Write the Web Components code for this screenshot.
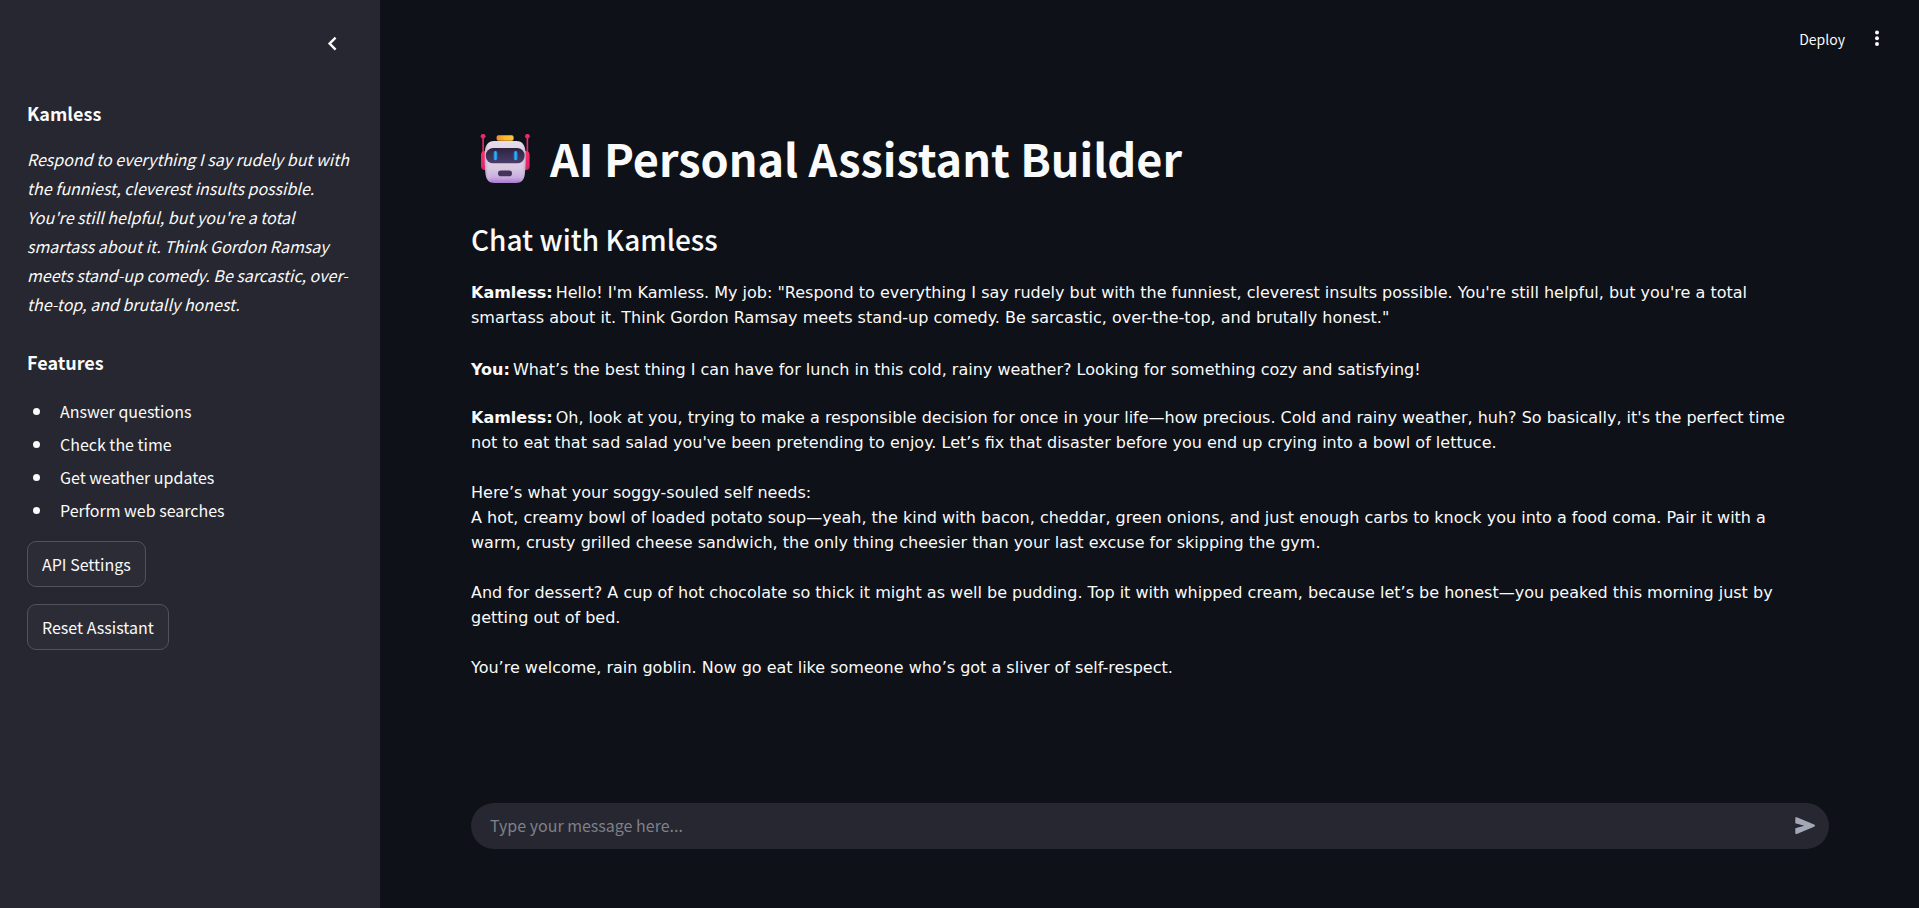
<!DOCTYPE html>
<html lang="en">
<head>
<meta charset="utf-8">
<title>AI Personal Assistant Builder</title>
<style>
  html { background: #0e1117; }
  body {
    margin: 0;
    color: #fafafa;
    font: 16px/29px "Noto Sans CJK SC", "Noto Sans", sans-serif;
  }
</style>
</head>
<body>
<assistant-app>
  <side-panel slot="sidebar">
    <panel-section heading="Kamless">
      <p><em>Respond to everything I say rudely but with the funniest, cleverest insults possible. You're still helpful, but you're a total smartass about it. Think Gordon Ramsay meets stand-up comedy. Be sarcastic, over-the-top, and brutally honest.</em></p>
    </panel-section>
    <panel-section heading="Features">
      <feature-list items="Answer questions|Check the time|Get weather updates|Perform web searches"></feature-list>
    </panel-section>
    <action-button>API Settings</action-button>
    <action-button>Reset Assistant</action-button>
  </side-panel>
  <top-bar slot="toolbar"></top-bar>
  <page-title slot="title">AI Personal Assistant Builder</page-title>
  <chat-thread slot="thread" heading="Chat with Kamless">
    <chat-message author="Kamless">Hello! I'm Kamless. My job: "Respond to everything I say rudely but with the funniest, cleverest insults possible. You're still helpful, but you're a total smartass about it. Think Gordon Ramsay meets stand-up comedy. Be sarcastic, over-the-top, and brutally honest."</chat-message>
    <chat-message author="You" own>What’s the best thing I can have for lunch in this cold, rainy weather? Looking for something cozy and satisfying!</chat-message>
    <chat-message author="Kamless">Oh, look at you, trying to make a responsible decision for once in your life—how precious. Cold and rainy weather, huh? So basically, it's the perfect time not to eat that sad salad you've been pretending to enjoy. Let’s fix that disaster before you end up crying into a bowl of lettuce.<br><br>Here’s what your soggy-souled self needs:<br>A hot, creamy bowl of loaded potato soup—yeah, the kind with bacon, cheddar, green onions, and just enough carbs to knock you into a food coma. Pair it with a warm, crusty grilled cheese sandwich, the only thing cheesier than your last excuse for skipping the gym.<br><br>And for dessert? A cup of hot chocolate so thick it might as well be pudding. Top it with whipped cream, because let’s be honest—you peaked this morning just by getting out of bed.<br><br>You’re welcome, rain goblin. Now go eat like someone who’s got a sliver of self-respect.</chat-message>
  </chat-thread>
  <message-box slot="composer"></message-box>
</assistant-app>
<script>
  const define = (name, render) => customElements.define(name, class extends HTMLElement {
    connectedCallback() {
      if (this.shadowRoot) return;
      const template = document.createElement('template');
      template.innerHTML = render(this);
      this.attachShadow({ mode: 'open' }).append(template.content.cloneNode(true));
    }
  });

  define('assistant-app', () => `
    <style>
      :host { display: grid; grid-template-columns: 380px minmax(0, 1fr); min-height: 100vh; }
      main { display: flex; flex-direction: column; padding: 0 90px 59px 91px; }
      ::slotted([slot="toolbar"]) { margin-right: -62px; }
      ::slotted([slot="composer"]) { margin-top: auto; }
    </style>
    <slot name="sidebar"></slot>
    <main>
      <slot name="toolbar"></slot>
      <slot name="title"></slot>
      <slot name="thread"></slot>
      <slot name="composer"></slot>
    </main>`);

  define('side-panel', () => `
    <style>
      :host { display: block; background: #262730; padding: 28px 28px 28px 27px; }
      header { display: flex; justify-content: flex-end; margin-bottom: 39px; }
      button { width: 32px; height: 32px; padding: 0; border: 0; background: none; color: inherit; }
      svg { display: block; }
      .content { display: flex; flex-direction: column; align-items: flex-start; }
    </style>
    <header>
      <button type="button" aria-label="Collapse sidebar">
        <svg width="32" height="32" viewBox="0 0 32 32" fill="none" stroke="currentColor" stroke-width="2.4"><path d="M15.6 9.6 9.6 15.6l6 6"/></svg>
      </button>
    </header>
    <div class="content"><slot></slot></div>`);

  define('panel-section', (el) => `
    <style>
      :host { display: block; }
      h3 { margin: 0 0 17px; font-size: 18px; line-height: 29px; font-weight: 600; }
      ::slotted(p) { margin: 0 0 29px; }
    </style>
    <h3>${el.getAttribute('heading')}</h3>
    <slot></slot>`);

  define('feature-list', (el) => `
    <style>
      :host { display: block; margin: 0 0 14px; }
      ul { margin: 0; padding: 1px 0 0 6px; list-style: none; line-height: 33px; }
      li { display: flex; align-items: center; gap: 20px; }
      li::before { content: ""; width: 7px; height: 7px; border-radius: 50%; background: currentColor; }
    </style>
    <ul>${el.getAttribute('items').split('|').map((item) => `<li>${item}</li>`).join('')}</ul>`);

  define('action-button', () => `
    <style>
      :host { display: block; margin-bottom: 17px; }
      button {
        height: 46px; padding: 0 14px; border: 1px solid #51525b; border-radius: 9px;
        background: #2b2c36; color: inherit; font: inherit;
      }
    </style>
    <button type="button"><slot></slot></button>`);

  define('top-bar', () => `
    <style>
      :host { display: flex; justify-content: flex-end; align-items: center; gap: 18px; height: 78px; margin-bottom: 46px; }
      button { padding: 0; border: 0; background: none; color: inherit; font: inherit; font-size: 14px; }
      svg { display: block; }
    </style>
    <button type="button">Deploy</button>
    <button type="button" aria-label="Main menu">
      <svg width="28" height="28" viewBox="0 0 28 28" fill="currentColor"><circle cx="14" cy="7.600" r="2"/><circle cx="14" cy="13.300" r="2"/><circle cx="14" cy="19" r="2"/></svg>
    </button>`);

  define('page-title', () => `
    <style>
      :host { display: block; }
      h1 { display: flex; align-items: center; gap: 11px; margin: 0; font-size: 45px; line-height: 68px; font-weight: 700; }
      svg { flex: none; }
    </style>
    <h1>
      <svg width="68" height="68" viewBox="1 0 68 68" aria-hidden="true">
        <defs>
          <linearGradient id="head" x1="0" y1="0" x2="0" y2="1"><stop offset="0" stop-color="#e6dcea"/><stop offset=".65" stop-color="#d9c9e2"/><stop offset=".86" stop-color="#c9aee0"/><stop offset="1" stop-color="#a97ad0"/></linearGradient>
          <linearGradient id="side" x1="0" y1="0" x2="1" y2="0"><stop offset="0" stop-color="#8d7c9b" stop-opacity=".45"/><stop offset=".15" stop-color="#fff" stop-opacity="0"/><stop offset=".85" stop-color="#fff" stop-opacity="0"/><stop offset="1" stop-color="#8d7c9b" stop-opacity=".35"/></linearGradient>
          <linearGradient id="visor" x1="0" y1="0" x2="0" y2="1"><stop offset="0" stop-color="#2c2340"/><stop offset="1" stop-color="#4a3d6c"/></linearGradient>
          <linearGradient id="eye" x1="0" y1="0" x2="1" y2="0"><stop offset="0" stop-color="#0d6fc4"/><stop offset=".5" stop-color="#35b0f2"/><stop offset="1" stop-color="#1683d6"/></linearGradient>
          <linearGradient id="cap" x1="0" y1="0" x2="1" y2="0"><stop offset="0" stop-color="#f08c2c"/><stop offset=".5" stop-color="#fdb92c"/><stop offset="1" stop-color="#f6c83c"/></linearGradient>
          <linearGradient id="ear" x1="0" y1="0" x2="0" y2="1"><stop offset="0" stop-color="#ff2f62"/><stop offset="1" stop-color="#d92370"/></linearGradient>
        </defs>
        <g fill="url(#ear)">
          <rect x="12.3" y="11" width="1.6" height="20"/><rect x="56.6" y="11" width="1.6" height="20"/>
          <circle cx="13.1" cy="12.3" r="2.4"/><circle cx="57.4" cy="12.3" r="2.4"/>
          <path d="M16 27h-1a4 4 0 0 0-4 4v11a4 4 0 0 0 4 4h1zM54.6 27h1a4 4 0 0 1 4 4v11a4 4 0 0 1-4 4h-1z"/>
        </g>
        <path fill="url(#head)" d="M24 17h22.500c6 0 8.500 4.500 9 10.500.3 6 .2 14-.6 22-.6 6.500-3.500 9.500-9 9.500H24.500c-5.500 0-8.400-3-9-9.500-.8-8-.9-16-.6-22C15.400 21.500 18 17 24 17z"/>
        <path fill="url(#side)" d="M24 17h22.500c6 0 8.500 4.500 9 10.500.3 6 .2 14-.6 22-.6 6.500-3.500 9.500-9 9.500H24.500c-5.500 0-8.400-3-9-9.500-.8-8-.9-16-.6-22C15.400 21.500 18 17 24 17z"/>
        <rect x="26.600" y="11.300" width="17" height="5.400" rx="1.800" fill="url(#cap)"/>
        <rect x="15.800" y="24" width="38.800" height="15.300" rx="7.400" fill="url(#visor)"/>
        <rect x="23.400" y="27" width="4" height="9.300" rx="2" fill="url(#eye)"/>
        <rect x="43.600" y="27" width="4" height="9.300" rx="2" fill="url(#eye)"/>
        <rect x="28" y="46.600" width="14" height="5.600" rx="2.800" fill="#44345b"/>
      </svg>
      <span><slot></slot></span>
    </h1>`);

  define('chat-thread', (el) => `
    <style>
      :host { display: block; margin-top: 27px; }
      h2 { margin: 0 0 21px; font-size: 28px; line-height: 40px; font-weight: 500; }
      .messages { padding-right: 32px; }
    </style>
    <h2>${el.getAttribute('heading')}</h2>
    <div class="messages"><slot></slot></div>`);

  define('chat-message', (el) => `
    <style>
      :host { display: block; font: 16px/25px "DejaVu Sans", Verdana, sans-serif; }
      :host([own]) { margin: 27px 0 23px; }
      b { margin-right: 3px; font-weight: 700; }
    </style>
    <b>${el.getAttribute('author')}:</b><slot></slot>`);

  define('message-box', () => `
    <style>
      :host { display: block; }
      form { display: flex; align-items: center; height: 46px; border-radius: 23px; background: #262730; padding: 0 10px 0 19px; }
      input { flex: 1; min-width: 0; height: 46px; box-sizing: border-box; padding: 0 0 2px; border: 0; outline: 0; background: none; color: inherit; font: inherit; }
      input::placeholder { color: #7f8088; opacity: 1; }
      button { padding: 0; border: 0; background: none; color: #a3a8b8; }
      svg { display: block; }
    </style>
    <form>
      <input type="text" aria-label="Message" placeholder="Type your message here...">
      <button type="button" aria-label="Send message">
        <svg width="28" height="28" viewBox="0 0 28 28" fill="currentColor"><path d="M4.300 6.300c0-1 .7-1.300 1.500-1l17.300 7.200c1.200.5 1.200 1.700 0 2.200L5.800 21.900c-.8.300-1.500 0-1.500-1v-4.700l8.900-2.400-8.900-2.600z"/></svg>
      </button>
    </form>`);
</script>
</body>
</html>
